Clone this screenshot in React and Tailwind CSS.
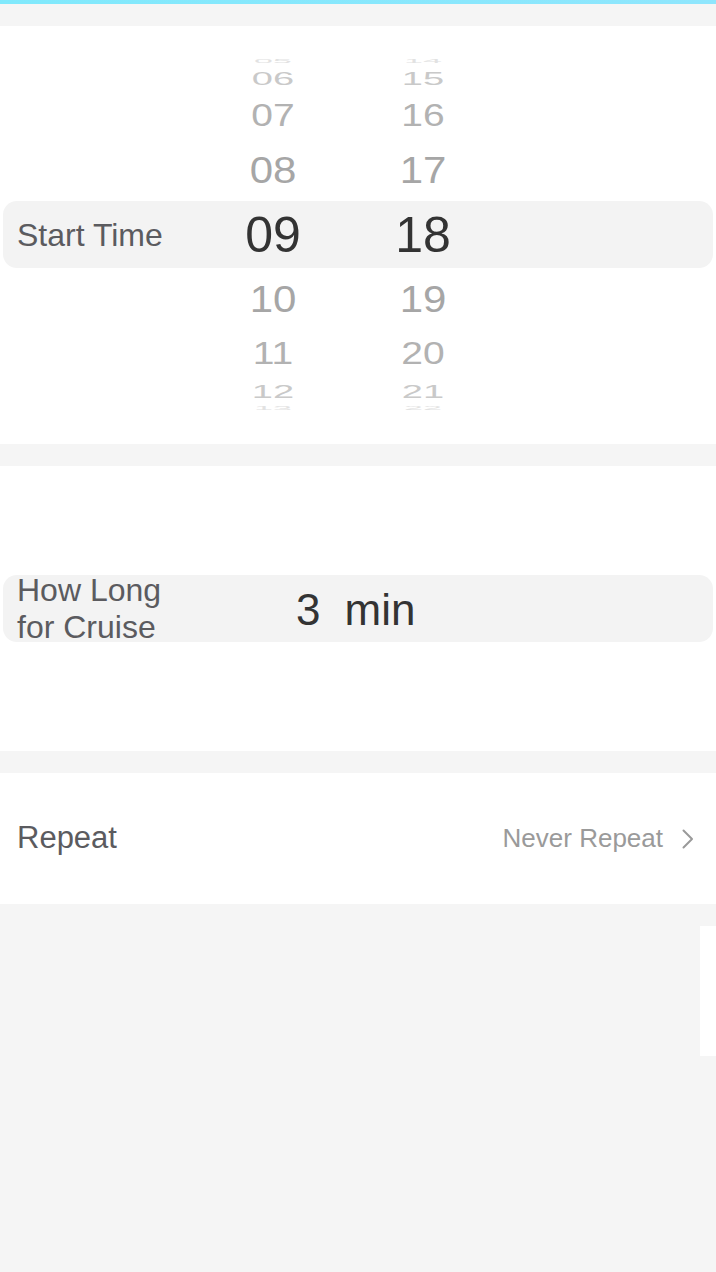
import React from 'react';

const font = { fontFamily: '"Liberation Sans", Arial, sans-serif' };

// one line of the wheel: hour + minute, squashed to fake the 3D drum
const WheelRow = ({ h, hour, minute, size, scale, color, children, selected }) => {
  const numCls = `inline-block leading-none ${size} ${color}`;
  return (
    <div
      className={`flex mx-[3px] overflow-hidden ${h} ${selected ? 'bg-[#f3f3f3] rounded-[14px]' : ''}`}
    >
      <div className="w-[220px] pl-[14px] flex items-center">{children}</div>
      <div className="w-[100px] flex items-center justify-center">
        <span className={numCls} style={{ transform: `scaleY(${scale})` }}>{hour}</span>
      </div>
      <div className="w-[100px] ml-[50px] flex items-center justify-center">
        <span className={numCls} style={{ transform: `scaleY(${scale})` }}>{minute}</span>
      </div>
    </div>
  );
};

const Chevron = () => (
  <svg width="14" height="22" viewBox="0 0 14 22" fill="none">
    <path d="M2.5 2.5 L11 11 L2.5 19.5" stroke="#9a9a9a" strokeWidth="2" strokeLinecap="round" strokeLinejoin="round" />
  </svg>
);

const App = () => {
  return (
    <div className="min-h-screen bg-[#f5f5f5] flex flex-col" style={font}>
      <div className="h-[4px] bg-gradient-to-r from-[#80e9fc] to-[#8fe6fd]" />
      <div className="h-[22px]" />

      {/* start time picker */}
      <section className="bg-white pt-[32px] pb-[33px]">
        <WheelRow h="h-[6px]" hour="05" minute="14" size="text-[34px]" scale={0.15} color="text-[#e2e2e2]" />
        <WheelRow h="h-[28px]" hour="06" minute="15" size="text-[38px]" scale={0.5} color="text-[#c9c9c9]" />
        <WheelRow h="h-[47px]" hour="07" minute="16" size="text-[39px]" scale={0.78} color="text-[#b2b2b2]" />
        <WheelRow h="h-[62px]" hour="08" minute="17" size="text-[42px]" scale={0.9} color="text-[#a6a6a6]" />
        <WheelRow h="h-[67px]" hour="09" minute="18" size="text-[50px]" scale={1} color="text-[#333333]" selected>
          <span className="text-[32px] text-[#5b5b5f] leading-none">Start Time</span>
        </WheelRow>
        <WheelRow h="h-[62px]" hour="10" minute="19" size="text-[42px]" scale={0.9} color="text-[#a6a6a6]" />
        <WheelRow h="h-[47px]" hour="11" minute="20" size="text-[39px]" scale={0.78} color="text-[#b2b2b2]" />
        <WheelRow h="h-[28px]" hour="12" minute="21" size="text-[38px]" scale={0.5} color="text-[#c9c9c9]" />
        <WheelRow h="h-[6px]" hour="13" minute="22" size="text-[34px]" scale={0.15} color="text-[#e2e2e2]" />
      </section>

      <div className="h-[22px]" />

      {/* cruise duration */}
      <section className="bg-white py-[109px]">
        <div className="mx-[3px] h-[67px] bg-[#f3f3f3] rounded-[14px] flex items-center">
          <div className="w-[280px] pl-[14px] text-[32px] leading-[37px] text-[#5b5b5f]">
            How Long
            <br />
            for Cruise
          </div>
          <div className="ml-[13px] mt-[3px] flex items-center gap-[24px] text-[44px] leading-none text-[#333333]">
            <span>3</span>
            <span>min</span>
          </div>
        </div>
      </section>

      <div className="h-[22px]" />

      {/* repeat */}
      <section className="bg-white h-[131px] flex items-center justify-between pl-[17px] pr-[21px]">
        <span className="text-[31px] text-[#5b5b5f]">Repeat</span>
        <div className="flex items-center gap-[18px]">
          <span className="text-[26px] text-[#9a9a9a]">Never Repeat</span>
          <Chevron />
        </div>
      </section>

      <div className="flex justify-end pt-[22px]">
        <div className="w-[16px] h-[130px] bg-white" />
      </div>
    </div>
  );
};

export default App;
